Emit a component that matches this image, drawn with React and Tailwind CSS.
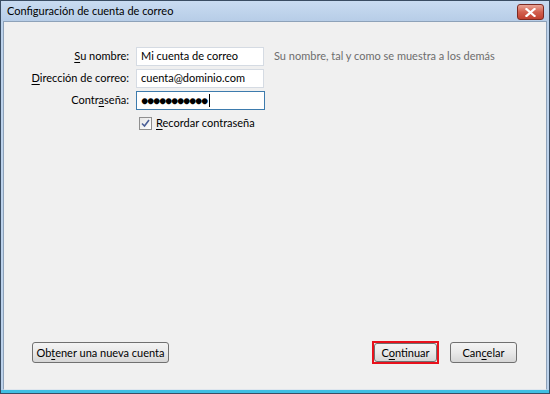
import React from "react";

function U({ children }) {
  return <span className="underline underline-offset-[2px]">{children}</span>;
}

function Field({ children, focused }) {
  return (
    <div
      className={`h-[19px] flex items-center bg-white border px-[4px] ${
        focused ? "border-[#3d7bad] w-[129px]" : "border-[#d5dbe3] w-[128px]"
      }`}
    >
      {children}
    </div>
  );
}

function WinButton({ children, className = "" }) {
  return (
    <button
      className={`h-[21px] whitespace-nowrap rounded-[3px] border border-[#707070] bg-gradient-to-b from-[#f4f4f4] via-[#e9e9e9] to-[#d6d6d6] text-[11px] text-black leading-none ${className}`}
    >
      {children}
    </button>
  );
}

export default function App() {
  return (
    <div className="w-[550px] h-[394px] flex flex-col bg-[#bcd2eb] border border-[#3a4d63] font-['Segoe_UI',Lato,'Open_Sans',sans-serif] text-[11px] text-black select-none">
      {/* Title bar */}
      <div className="h-[20px] flex items-center justify-between pl-[6px] pr-[5px] bg-gradient-to-b from-[#c9dcf1] to-[#b7cde7]">
        <span className="text-[11px] text-black">Configuración de cuenta de correo</span>
        <div className="w-[27px] h-[16px] mt-[2px] rounded-[3px] border border-[#7d2a22] bg-gradient-to-b from-[#e8a597] via-[#d2604f] to-[#c1402f] flex items-center justify-center">
          <svg width="11" height="9" viewBox="0 0 11 9">
            <path d="M1.5 1 L9.5 8 M9.5 1 L1.5 8" stroke="#ffffff" strokeWidth="2.2" strokeLinecap="square" />
          </svg>
        </div>
      </div>

      {/* Frame + content */}
      <div className="flex-1 flex px-[2px] border-b-[3px] border-b-[#3fbfe3]">
        <div className="flex-1 flex flex-col bg-[#f0f0f0] border border-[#8ea2b9] border-b-[#dfe6ee]">
          {/* Form */}
          <div className="pt-[25px] grid grid-cols-[125px_auto_1fr] gap-x-[7px] gap-y-[3px] items-center">
            <span className="text-right">
              <U>S</U>u nombre:
            </span>
            <Field>Mi cuenta de correo</Field>
            <span className="pl-[2px] text-[#6d6d6d]">Su nombre, tal y como se muestra a los demás</span>

            <span className="text-right">
              <U>D</U>irección de correo:
            </span>
            <Field>cuenta@dominio.com</Field>
            <span />

            <span className="text-right">
              Contr<U>a</U>seña:
            </span>
            <Field focused>
              <span className="tracking-[-1.2px] text-[12px]">●●●●●●●●●●●</span>
              <span className="ml-[2px] w-px h-[13px] bg-black" />
            </Field>
            <span />

            <span />
            <label className="mt-[2px] flex items-center gap-[4px] pl-[3px]">
              <span className="w-[13px] h-[13px] border border-[#8f8f8f] bg-gradient-to-br from-[#e6e6e6] to-[#ffffff] flex items-center justify-center">
                <svg width="9" height="9" viewBox="0 0 9 9">
                  <path d="M1 4.5 L3.5 7 L8 1" fill="none" stroke="#4a5f97" strokeWidth="1.6" />
                </svg>
              </span>
              <span className="whitespace-nowrap">
                <U>R</U>ecordar contraseña
              </span>
            </label>
            <span />
          </div>

          <div className="flex-1" />

          {/* Buttons */}
          <div className="flex items-center justify-between pl-[28px] pr-[29px] pb-[25px]">
            <WinButton className="w-[137px]">
              Ob<U>t</U>ener una nueva cuenta
            </WinButton>
            <div className="flex items-center gap-[11px]">
              <div className="w-[67px] h-[23px] border-2 border-[#e8111c] flex">
                <WinButton className="flex-1 h-full border-[#8a8a8a] rounded-[1px]">
                  C<U>o</U>ntinuar
                </WinButton>
              </div>
              <WinButton className="w-[67px]">
                Can<U>c</U>elar
              </WinButton>
            </div>
          </div>
        </div>
      </div>
    </div>
  );
}
